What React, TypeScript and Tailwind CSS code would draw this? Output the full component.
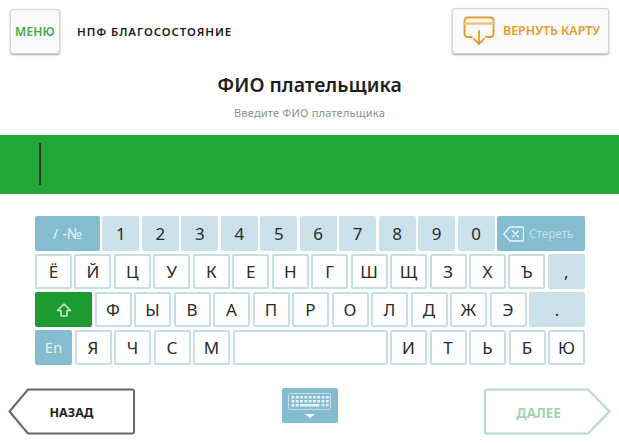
const digits = ['1', '2', '3', '4', '5', '6', '7', '8', '9', '0'];
const row2 = ['Ё', 'Й', 'Ц', 'У', 'К', 'Е', 'Н', 'Г', 'Ш', 'Щ', 'З', 'Х', 'Ъ'];
const row3 = ['Ф', 'Ы', 'В', 'А', 'П', 'Р', 'О', 'Л', 'Д', 'Ж', 'Э'];
const row4a = ['Я', 'Ч', 'С', 'М'];
const row4b = ['И', 'Т', 'Ь', 'Б', 'Ю'];

function Key({ label }: { label: string }) {
    return (
        <div className="w-[37px] h-[35px] shrink-0 rounded-[2px] bg-white border-2 border-[#c5dfe4] flex items-center justify-center text-[17px] text-[#2a2a2a]">
            {label}
        </div>
    );
}

function LightKey({ label, className }: { label: string; className: string }) {
    return (
        <div className={`h-[35px] shrink-0 rounded-[2px] bg-[#cbe2ea] flex items-center justify-center text-[17px] text-[#2a2a2a] ${className}`}>
            {label}
        </div>
    );
}

function CardIcon() {
    return (
        <svg width="32" height="30" viewBox="0 0 32 30" fill="none" stroke="#e59a2c" strokeWidth="1.8" strokeLinecap="round" strokeLinejoin="round">
            <path d="M9 21H4.5a3 3 0 0 1-3-3V4.500a3 3 0 0 1 3-3h23a3 3 0 0 1 3 3V18a3 3 0 0 1-3 3H23" />
            <path d="M2 7.500h28" strokeWidth="2.6" stroke="#f0c27a" />
            <path d="M16 15v13M11 23l5 5 5-5" />
        </svg>
    );
}

function EraseIcon() {
    return (
        <svg width="21" height="16" viewBox="0 0 21 16" fill="none" stroke="#eef7f9" strokeWidth="1.3" strokeLinejoin="round" strokeLinecap="round">
            <path d="M7 1h12.500a1 1 0 0 1 1 1v12a1 1 0 0 1-1 1H7L.8 8z" />
            <path d="m9.500 5 6 6M15.500 5l-6 6" />
        </svg>
    );
}

function KeyboardIcon() {
    const cells = [];
    for (let r = 0; r < 3; r++) {
        for (let c = 0; c < 9; c++) {
            if (r === 2 && c > 1 && c < 7) continue;
            cells.push(<rect key={`${r}-${c}`} x={3.500 + c * 4.300} y={3 + r * 4} width="2.800" height="2.500" fill="#eaf4f7" />);
        }
    }
    return (
        <svg width="44" height="26" viewBox="0 0 44 26" fill="none">
            <rect x="0.500" y="0.500" width="42" height="16" rx="1" stroke="#d5e8ee" strokeWidth="0.800" />
            {cells}
            <rect x="12" y="11" width="19.500" height="2.500" fill="#eaf4f7" />
            <path d="M17 21h10l-5 4z" fill="#fff" />
        </svg>
    );
}

export default function App() {
    return (
        <div className="w-[619px] h-[443px] overflow-hidden bg-white font-['Noto_Sans',sans-serif]">
            {/* Header */}
            <div className="h-[56px] pt-[9px] pl-[10px] pr-[10px] flex items-start justify-between">
                <div className="flex items-center">
                    <div className="w-[50px] h-[45px] rounded-[3px] bg-[#f9faf9] border border-[#cfd6d6] shadow-[0_1px_2px_#9fa8a8] flex items-center justify-center text-[12px] font-semibold text-[#45a84f] tracking-[0.2px]">
                        МЕНЮ
                    </div>
                    <div className="ml-[17px] text-[11.5px] font-semibold tracking-[0.9px] text-[#1c1c1c]">НПФ БЛАГОСОСТОЯНИЕ</div>
                </div>
                <div className="w-[157px] h-[46px] -mt-[1px] rounded-[3px] bg-[#f9faf9] border border-[#cfd6d6] shadow-[0_1px_2px_#9fa8a8] flex items-center pl-[10px]">
                    <CardIcon />
                    <span className="ml-[8px] text-[12.4px] font-semibold text-[#e59a2c] whitespace-nowrap">ВЕРНУТЬ КАРТУ</span>
                </div>
            </div>

            {/* Title */}
            <div className="h-[79px] flex flex-col items-center">
                <div className="mt-[16px] text-[19.5px] leading-[26px] font-semibold text-[#1f1f1f]">ФИО плательщика</div>
                <div className="mt-[8px] text-[11px] leading-[14px] text-[#8b8f90] tracking-[0.2px]">Введите ФИО плательщика</div>
            </div>

            {/* Input band */}
            <div className="h-[59px] bg-[#21a637] pl-[39px] pt-[8px]">
                <div className="w-[2px] h-[42px] bg-[#1d3a24]" />
            </div>

            {/* Keyboard */}
            <div className="mt-[22px] ml-[35px] w-[550px] flex flex-col gap-[3px]">
                <div className="flex justify-between">
                    <div className="w-[65px] h-[35px] rounded-[2px] bg-[#85bccf] flex items-center justify-center text-[15px] text-[#e6f2f5]">/ -№</div>
                    {digits.map((d) => (
                        <LightKey key={d} label={d} className="w-[37px]" />
                    ))}
                    <div className="w-[88px] h-[35px] rounded-[2px] bg-[#85bccf] flex items-center pl-[6px] gap-[5px] text-[11.7px] text-[#c5e0e8]">
                        <EraseIcon />
                        Стереть
                    </div>
                </div>
                <div className="flex justify-between">
                    {row2.map((k) => (
                        <Key key={k} label={k} />
                    ))}
                    <LightKey label="," className="w-[37px]" />
                </div>
                <div className="flex justify-between">
                    <div className="w-[57px] h-[35px] rounded-[2px] bg-[#1d9a30] flex items-center justify-center">
                        <svg width="16" height="14" viewBox="0 0 16 14" fill="none" stroke="#bfe8c6" strokeWidth="1.600" strokeLinejoin="round">
                            <path d="M8 1 1.500 7.500H5V13h6V7.500h3.500z" />
                        </svg>
                    </div>
                    {row3.map((k) => (
                        <Key key={k} label={k} />
                    ))}
                    <LightKey label="." className="w-[56px]" />
                </div>
                <div className="flex justify-between">
                    <div className="w-[37px] h-[35px] rounded-[2px] bg-[#85bccf] flex items-center justify-center text-[15px] text-[#e6f2f5]">En</div>
                    {row4a.map((k) => (
                        <Key key={k} label={k} />
                    ))}
                    <div className="w-[155px] h-[35px] shrink-0 rounded-[2px] bg-white border-2 border-[#c5dfe4]" />
                    {row4b.map((k) => (
                        <Key key={k} label={k} />
                    ))}
                </div>
            </div>

            {/* Footer */}
            <div className="mt-[23px] pl-[8px] pr-[8px] flex items-start justify-between">
                <div className="relative w-[127px] h-[47px] flex items-center justify-center pt-[3px]">
                    <svg className="absolute inset-0" width="127" height="47" viewBox="0 0 127 47" fill="none">
                        <path d="M1.500 23.500 20 1.500h104a2 2 0 0 1 2 2v40a2 2 0 0 1-2 2H20z" stroke="#5f6b6e" strokeWidth="2" strokeLinejoin="round" fill="#fff" />
                    </svg>
                    <span className="relative text-[12.5px] font-bold text-[#222]">НАЗАД</span>
                </div>
                <div className="w-[56px] h-[35px] rounded-[2px] bg-[#85bccf] flex items-center justify-center">
                    <KeyboardIcon />
                </div>
                <div className="relative w-[127px] h-[47px] flex items-center justify-center pt-[3px] pr-[18px]">
                    <svg className="absolute inset-0" width="127" height="47" viewBox="0 0 127 47" fill="none">
                        <path d="M125.500 23.500 104 1.500H3a2 2 0 0 0-2 2v40a2 2 0 0 0 2 2h101z" stroke="#b3dcc0" strokeWidth="2" strokeLinejoin="round" fill="#fff" />
                    </svg>
                    <span className="relative text-[13.4px] font-bold text-[#a5d3b2]">ДАЛЕЕ</span>
                </div>
            </div>
        </div>
    );
}
